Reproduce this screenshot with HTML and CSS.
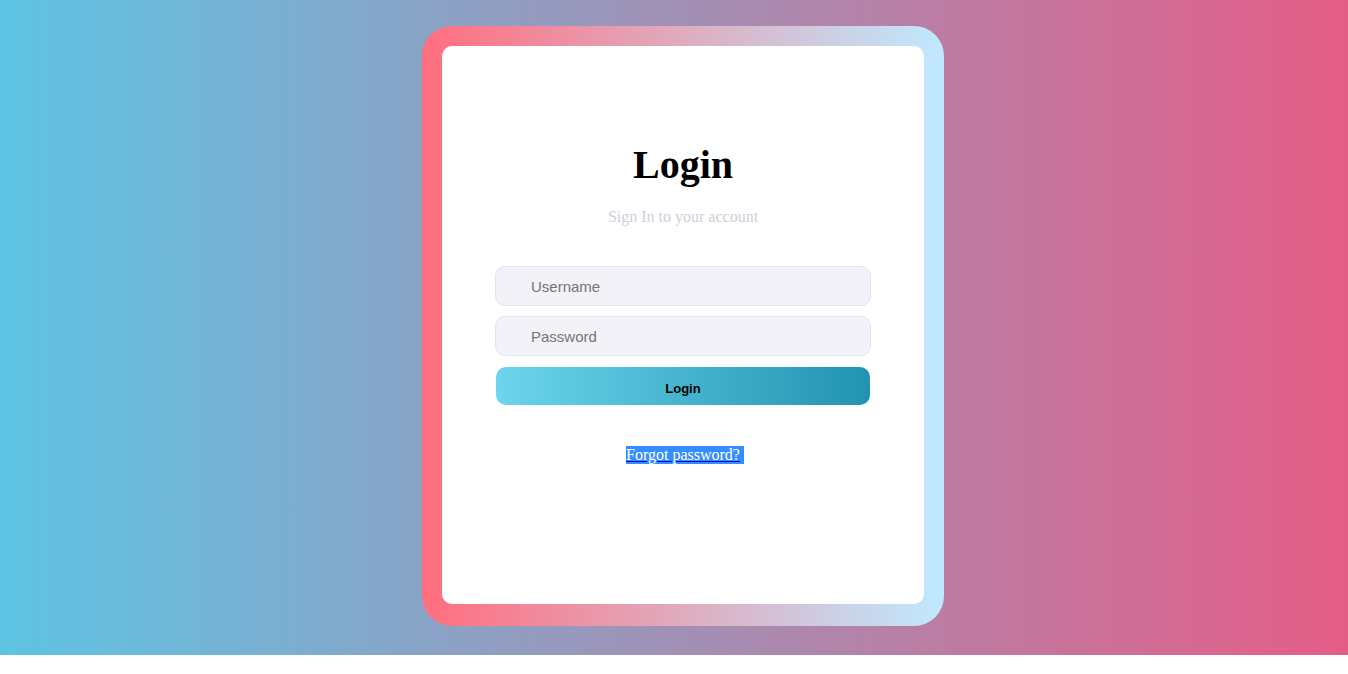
FILE: index.html
```html
<!DOCTYPE html>
<html lang="en">
<head>
  <meta charset="utf-8">
  <title>Login</title>
  <link rel="stylesheet" href="styles.css">
</head>
<body>
  <main class="page">
    <div class="frame">
      <form class="card">
        <h1 class="title">Login</h1>
        <p class="subtitle">Sign In to your account</p>
        <input class="field" type="text" placeholder="Username" aria-label="Username">
        <input class="field" type="password" placeholder="Password" aria-label="Password">
        <button class="submit" type="button">Login</button>
        <p class="help"><a class="forgot" href="#">Forgot password?</a></p>
      </form>
    </div>
  </main>
</body>
</html>
```

FILE: styles.css
```css
* {
  box-sizing: border-box;
}

body {
  margin: 0;
  background: #fff;
  font-family: "Liberation Serif", "Times New Roman", serif;
  font-size: 16px;
}

.page {
  display: flex;
  justify-content: center;
  padding: 26px 0 29px 18px;
  background: linear-gradient(to right, #5ec4e4, #e55d87);
}

.frame {
  width: 100%;
  max-width: 522px;
  padding: 20px 20px 22px;
  border-radius: 30px;
  background: linear-gradient(to right, #ff6e7f, #bfe9ff);
}

.card {
  display: flex;
  flex-direction: column;
  padding: 96px 53px 140px;
  border-radius: 10px;
  background: #fff;
}

.title {
  margin: 0;
  font-size: 40px;
  line-height: 46px;
  text-align: center;
}

.subtitle {
  margin: 20px 0 40px;
  color: #cbd1dc;
  line-height: 18px;
  text-align: center;
}

.field {
  height: 40px;
  margin: 0 0 10px;
  padding: 0 35px;
  border: 1px solid #e4e3ee;
  border-radius: 10px;
  background: #f3f2f9;
  font-family: "Liberation Sans", Arial, sans-serif;
  font-size: 15px;
}

.submit {
  height: 38px;
  margin: 1px 1px 0;
  padding: 4px 0 0;
  border: 0;
  border-radius: 10px;
  background: linear-gradient(to right, #6dd5ed, #2193b0);
  color: #000;
  font-family: "Liberation Sans", Arial, sans-serif;
  font-size: 13px;
  font-weight: bold;
}

.help {
  margin: 41px 0 0;
  line-height: 18px;
  text-align: center;
}

.forgot {
  display: inline-block;
  margin-right: -4px;
  padding-right: 4px;
  background: #338fff;
  color: #fff;
  text-decoration-color: #0000ee;
}
```
